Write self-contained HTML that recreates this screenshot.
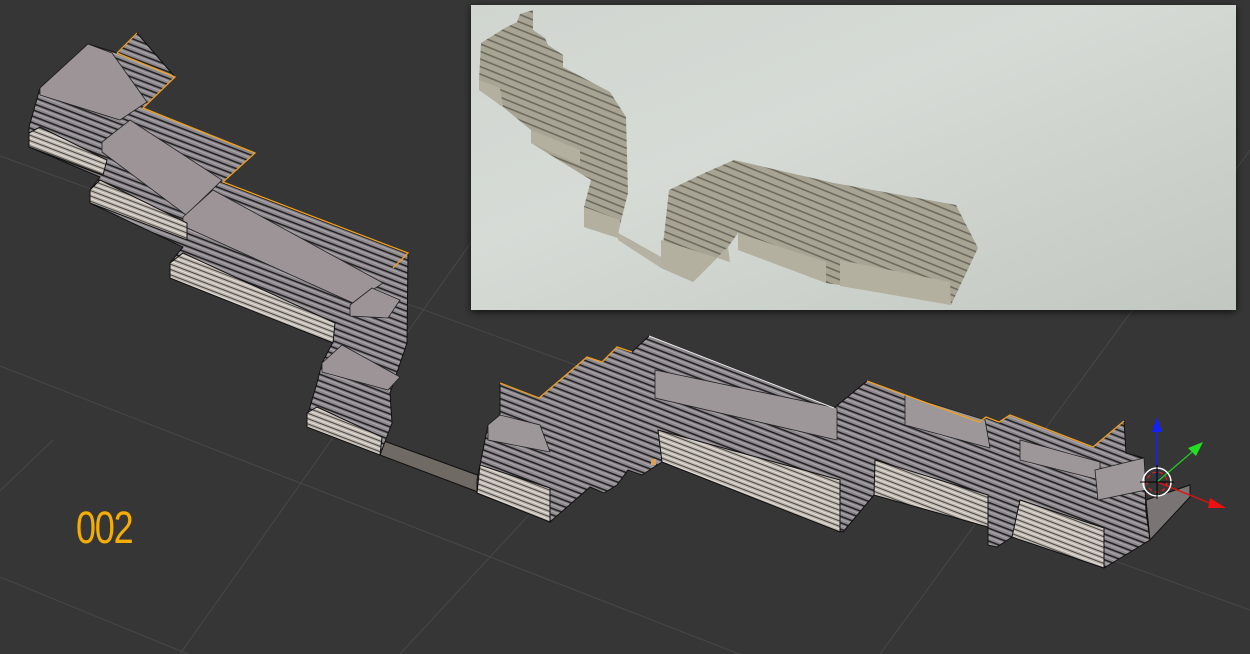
<!DOCTYPE html>
<html><head><meta charset="utf-8"><style>
html,body{margin:0;padding:0;background:#363636;width:1250px;height:654px;overflow:hidden}
svg{display:block}
</style></head><body>
<svg width="1250" height="654" viewBox="0 0 1250 654" xmlns="http://www.w3.org/2000/svg">
<defs>
<pattern id="st" width="40" height="6" patternUnits="userSpaceOnUse" patternTransform="rotate(21)">
<rect width="40" height="6" fill="#8c878d"/><rect y="0" width="40" height="1.6" fill="#222"/><rect y="3" width="40" height="0.8" fill="#b5b0b4"/>
</pattern>
<pattern id="st2" width="40" height="5" patternUnits="userSpaceOnUse" patternTransform="rotate(21)">
<rect width="40" height="5" fill="#bcb6ae"/><rect y="0" width="40" height="1" fill="#4a4644"/><rect y="2.5" width="40" height="1" fill="#e6e0da"/>
</pattern>
<pattern id="ist" width="40" height="7" patternUnits="userSpaceOnUse" patternTransform="rotate(22)">
<rect width="40" height="7" fill="#a7a494"/><rect y="0" width="40" height="1.6" fill="#6d6a5d"/>
</pattern>
<linearGradient id="bg" x1="0" y1="0" x2="1" y2="1"><stop offset="0" stop-color="#d0d5d0"/><stop offset="0.4" stop-color="#d6dbd6"/><stop offset="1" stop-color="#c2c7c1"/></linearGradient>
<filter id="sh" x="-5%" y="-5%" width="110%" height="115%"><feDropShadow dx="0" dy="2" stdDeviation="4" flood-color="#000" flood-opacity="0.7"/></filter>
</defs>
<!-- grid -->
<g stroke="#474747" stroke-width="1" fill="none">
<line x1="0" y1="156" x2="1250" y2="610"/>
<line x1="0" y1="366" x2="1250" y2="853"/>
<line x1="0" y1="577" x2="300" y2="700"/>
<line x1="53" y1="440" x2="-20" y2="510"/>
<line x1="600" y1="60" x2="180" y2="654"/>
<line x1="1250" y1="150" x2="880" y2="654"/>
<line x1="580" y1="460" x2="400" y2="654"/>
</g>
<!-- floor strip -->
<polygon points="380,445 384,441 480,476 478,492 380,455" fill="#706a64" stroke="#111" stroke-width="1"/>
<!-- left wall -->
<polygon points="29,147 29,127 40,88 88,44 117,53 137,33 175,77 143,108 255,153 223,182 408,253 407,343 390,393 392,423 380,455 307,425 307,417 317,383 322,363 333,342 170,277 170,263 183,247 90,203 90,190 100,177" fill="url(#st)" stroke="#111"/>
<polygon points="40,88 88,44 112,53 147,102 120,120 40,95" fill="#9c9497" stroke="#222" stroke-width="0.8"/>
<polygon points="102,142 130,120 222,180 186,215 102,152" fill="#9c9497" stroke="#222" stroke-width="0.8"/>
<polygon points="183,217 213,190 383,283 353,303 183,226" fill="#9c9497" stroke="#222" stroke-width="0.8"/>
<polygon points="350,305 372,288 400,300 388,318 350,316" fill="#9c9497" stroke="#222" stroke-width="0.8"/>
<polygon points="322,363 342,345 400,377 388,390 322,372" fill="#9c9497" stroke="#222" stroke-width="0.8"/>
<polygon points="29,133 40,127 107,160 103,175 29,147" fill="url(#st2)" stroke="#111"/>
<polygon points="90,190 100,180 187,223 187,240 90,203" fill="url(#st2)" stroke="#111"/>
<polygon points="170,263 183,253 335,323 333,343 170,278" fill="url(#st2)" stroke="#111"/>
<polygon points="307,413 317,407 382,437 380,455 307,427" fill="url(#st2)" stroke="#111"/>
<polyline points="117,53 175,77 143,108 255,153 223,182 408,253 393,268" fill="none" stroke="#f0a020" stroke-width="1.3"/>
<polyline points="117,53 137,33" fill="none" stroke="#f0a020" stroke-width="1.2"/>
<!-- right wall -->
<polygon points="477,493 477,480 488,425 500,415 500,383 539,398 587,357 602,362 617,347 632,352 649,336 834,408 867,381 979,422 986,417 999,422 1010,415 1093,447 1124,421 1126,453 1144,458 1146,512 1150,540 1104,568 1012,537 997,547 988,545 988,527 874,495 843,532 662,462 642,475 628,470 617,485 604,493 590,487 550,522" fill="url(#st)" stroke="#111"/>
<polygon points="655,370 837,408 837,440 655,398" fill="#9e979a" stroke="#222" stroke-width="0.8"/>
<polygon points="488,425 500,415 540,425 550,452 488,440" fill="#9e979a" stroke="#222" stroke-width="0.8"/>
<polygon points="905,395 985,420 990,448 905,425" fill="#9e979a" stroke="#222" stroke-width="0.8"/>
<polygon points="1020,440 1100,462 1100,480 1020,460" fill="#9e979a" stroke="#222" stroke-width="0.8"/>
<polygon points="1095,470 1144,458 1146,490 1098,500" fill="#9e979a" stroke="#222" stroke-width="0.8"/>
<polygon points="658,430 840,480 840,532 662,462" fill="url(#st2)" stroke="#111"/>
<polygon points="480,465 550,488 550,522 477,493" fill="url(#st2)" stroke="#111"/>
<polygon points="875,460 988,495 988,527 874,495" fill="url(#st2)" stroke="#111"/>
<polygon points="1020,500 1104,528 1104,568 1012,537" fill="url(#st2)" stroke="#111"/>
<polygon points="1146,500 1190,485 1190,497 1150,540" fill="#7a7574" stroke="#111"/>
<polyline points="500,383 539,398 587,357 602,362 617,347 632,352" fill="none" stroke="#f0a020" stroke-width="1.3"/>
<polyline points="867,381 979,422 986,417 999,422 1010,415 1093,447 1124,421" fill="none" stroke="#f0a020" stroke-width="1.3"/>
<polyline points="649,336 834,408" fill="none" stroke="#eee" stroke-width="1"/>
<rect x="651" y="459" width="5" height="6" fill="#e0a050"/>
<!-- gizmo -->
<line x1="1157" y1="482" x2="1157" y2="428" stroke="#1020ff" stroke-width="1.5"/>
<polygon points="1157,417 1152,432 1162,432" fill="#1020ff"/>
<line x1="1157" y1="482" x2="1192" y2="452" stroke="#20d020" stroke-width="1.2"/>
<polygon points="1203,442 1188,448 1196,456" fill="#20e020"/>
<line x1="1157" y1="482" x2="1212" y2="504" stroke="#e01010" stroke-width="1.3"/>
<polygon points="1226,508 1210,498 1208,508" fill="#ee1010"/>
<circle cx="1157" cy="482" r="14" fill="none" stroke="#fff" stroke-width="1.5"/>
<circle cx="1157" cy="482" r="10" fill="none" stroke="#e02020" stroke-width="1.3" stroke-dasharray="4 3"/>
<line x1="1140" y1="482" x2="1174" y2="482" stroke="#000" stroke-width="1"/>
<line x1="1157" y1="465" x2="1157" y2="499" stroke="#000" stroke-width="1"/>
<text x="76" y="543" font-family="Liberation Sans, sans-serif" font-size="45" fill="#f5ad00" transform="translate(76 0) scale(0.8 1) translate(-76 0)" textLength="72">002</text>
<!-- inset render -->
<rect x="471" y="5" width="765" height="305" fill="url(#bg)" filter="url(#sh)"/>
<g>
<polygon points="479,80 481,43 505,28 517,22 520,14 533,10 533,30 545,38 548,45 563,55 563,67 610,92 626,117 628,193 618,233 661,257 661,263 669,190 700,175 734,160 834,183 956,205 978,248 951,305 894,293 826,283 738,233 728,247 693,282 661,263 618,238 584,227 584,207 591,180 531,143 531,130 503,107 479,90" fill="url(#ist)"/>
<polygon points="618,233 661,257 661,268 618,240" fill="#b5b2a4"/>
<polygon points="584,207 620,220 618,238 584,227" fill="#b3b0a0"/>
<polygon points="531,130 580,150 580,165 531,143" fill="#b3b0a0"/>
<polygon points="479,80 500,88 503,107 479,90" fill="#b3b0a0"/>
<polygon points="661,240 730,262 728,247 693,282 661,268" fill="#b3b0a0"/>
<polygon points="738,233 826,262 826,283 738,250" fill="#b3b0a0"/>
<polygon points="840,260 950,282 951,305 840,286" fill="#b3b0a0"/>
</g>
</svg>
</body></html>
